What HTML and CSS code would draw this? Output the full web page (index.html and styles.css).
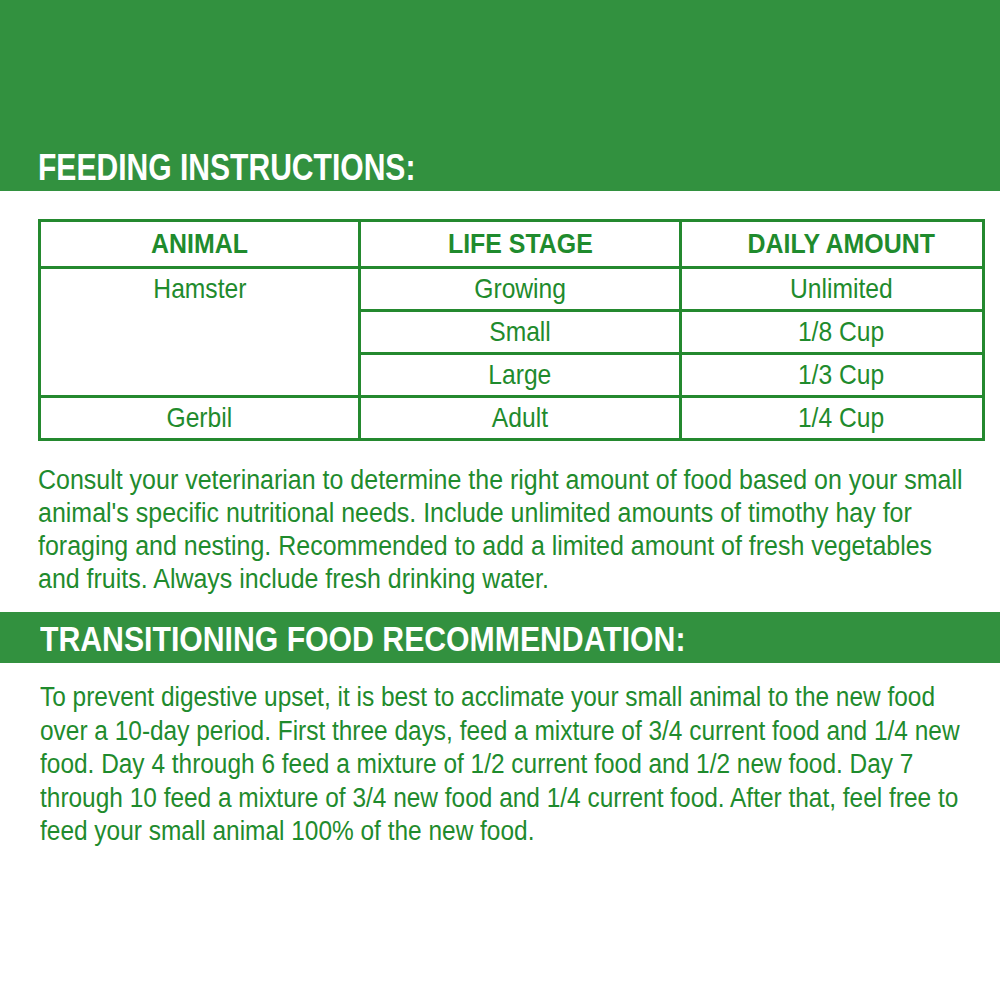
FILE: index.html
```html
<!DOCTYPE html>
<html>
<head>
<meta charset="utf-8">
<link rel="stylesheet" href="styles.css">
</head>
<body>
<div class="band band-top">
  <h1 class="band-title"><span class="squeeze">FEEDING INSTRUCTIONS:</span></h1>
</div>
<div class="content">
  <table class="feed">
    <colgroup>
      <col class="c1"><col class="c2"><col class="c3">
    </colgroup>
    <thead>
      <tr><th><span class="cell">ANIMAL</span></th><th><span class="cell">LIFE STAGE</span></th><th class="amt"><span class="cell">DAILY AMOUNT</span></th></tr>
    </thead>
    <tbody>
      <tr><td rowspan="3" class="top"><span class="cell">Hamster</span></td><td><span class="cell">Growing</span></td><td class="amt"><span class="cell">Unlimited</span></td></tr>
      <tr><td><span class="cell">Small</span></td><td class="amt"><span class="cell">1/8 Cup</span></td></tr>
      <tr><td><span class="cell">Large</span></td><td class="amt"><span class="cell">1/3 Cup</span></td></tr>
      <tr><td><span class="cell">Gerbil</span></td><td><span class="cell">Adult</span></td><td class="amt"><span class="cell">1/4 Cup</span></td></tr>
    </tbody>
  </table>
  <p class="text text-one">Consult your veterinarian to determine the right amount of food based on your small<br>animal's specific nutritional needs. Include unlimited amounts of timothy hay for<br>foraging and nesting. Recommended to add a limited amount of fresh vegetables<br>and fruits. Always include fresh drinking water.</p>
</div>
<div class="band band-mid">
  <h2 class="band-title"><span class="squeeze">TRANSITIONING FOOD RECOMMENDATION:</span></h2>
</div>
<div class="content">
  <p class="text text-two">To prevent digestive upset, it is best to acclimate your small animal to the new food<br>over a 10-day period. First three days, feed a mixture of 3/4 current food and 1/4 new<br>food. Day 4 through 6 feed a mixture of 1/2 current food and 1/2 new food. Day 7<br>through 10 feed a mixture of 3/4 new food and 1/4 current food. After that, feel free to<br>feed your small animal 100% of the new food.</p>
</div>
</body>
</html>
```

FILE: styles.css
```css
html, body {
  margin: 0;
  padding: 0;
  background: #ffffff;
}
body {
  width: 1000px;
  overflow: hidden;
  font-family: "Liberation Sans", Arial, sans-serif;
  color: #1f8b2d;
}
.band {
  background: #32913f;
  color: #ffffff;
  box-sizing: border-box;
  padding: 0 38px;
}
.band-top {
  height: 191px;
  display: flex;
  align-items: flex-end;
  padding-bottom: 5px;
}
.band-mid {
  height: 51px;
  padding-top: 9px;
  padding-left: 40px;
}
.band-title {
  margin: 0;
  font-weight: bold;
  white-space: nowrap;
}
.squeeze {
  display: inline-block;
  transform-origin: 0 50%;
}
.band-top .band-title {
  font-size: 36px;
  line-height: 36px;
}
.band-top .squeeze {
  transform: scaleX(0.835);
}
.band-mid .band-title {
  font-size: 35px;
  line-height: 35px;
}
.band-mid .squeeze {
  transform: scaleX(0.863);
}
.content {
  padding: 0 38px;
}
.feed {
  margin-top: 28px;
  width: 944px;
  border-collapse: collapse;
  table-layout: fixed;
  border: 3px solid #24892f;
}
.c1 { width: 320px; }
.c2 { width: 321px; }
.c3 { width: 303px; }
.feed th, .feed td {
  border: 3px solid #24892f;
  text-align: center;
  padding: 0;
  font-size: 28px;
  line-height: 40px;
  height: 40px;
  vertical-align: middle;
  white-space: nowrap;
}
.feed .amt {
  padding-left: 19px;
}
.cell {
  display: inline-block;
  transform: scaleX(0.88);
  transform-origin: 50% 50%;
}
.feed th {
  font-weight: bold;
  height: 44px;
}
.feed th .cell {
  transform: scaleX(0.89);
}
.feed td.top {
  vertical-align: top;
}
.text {
  margin: 0;
  font-size: 27px;
  white-space: nowrap;
  transform: scaleX(0.925);
  transform-origin: 0 0;
}
.text-one {
  margin-top: 23px;
  line-height: 33px;
  padding-bottom: 16px;
}
.text-two {
  margin-top: 18px;
  margin-left: 2px;
  line-height: 33.5px;
  transform: scaleX(0.905);
}
```
